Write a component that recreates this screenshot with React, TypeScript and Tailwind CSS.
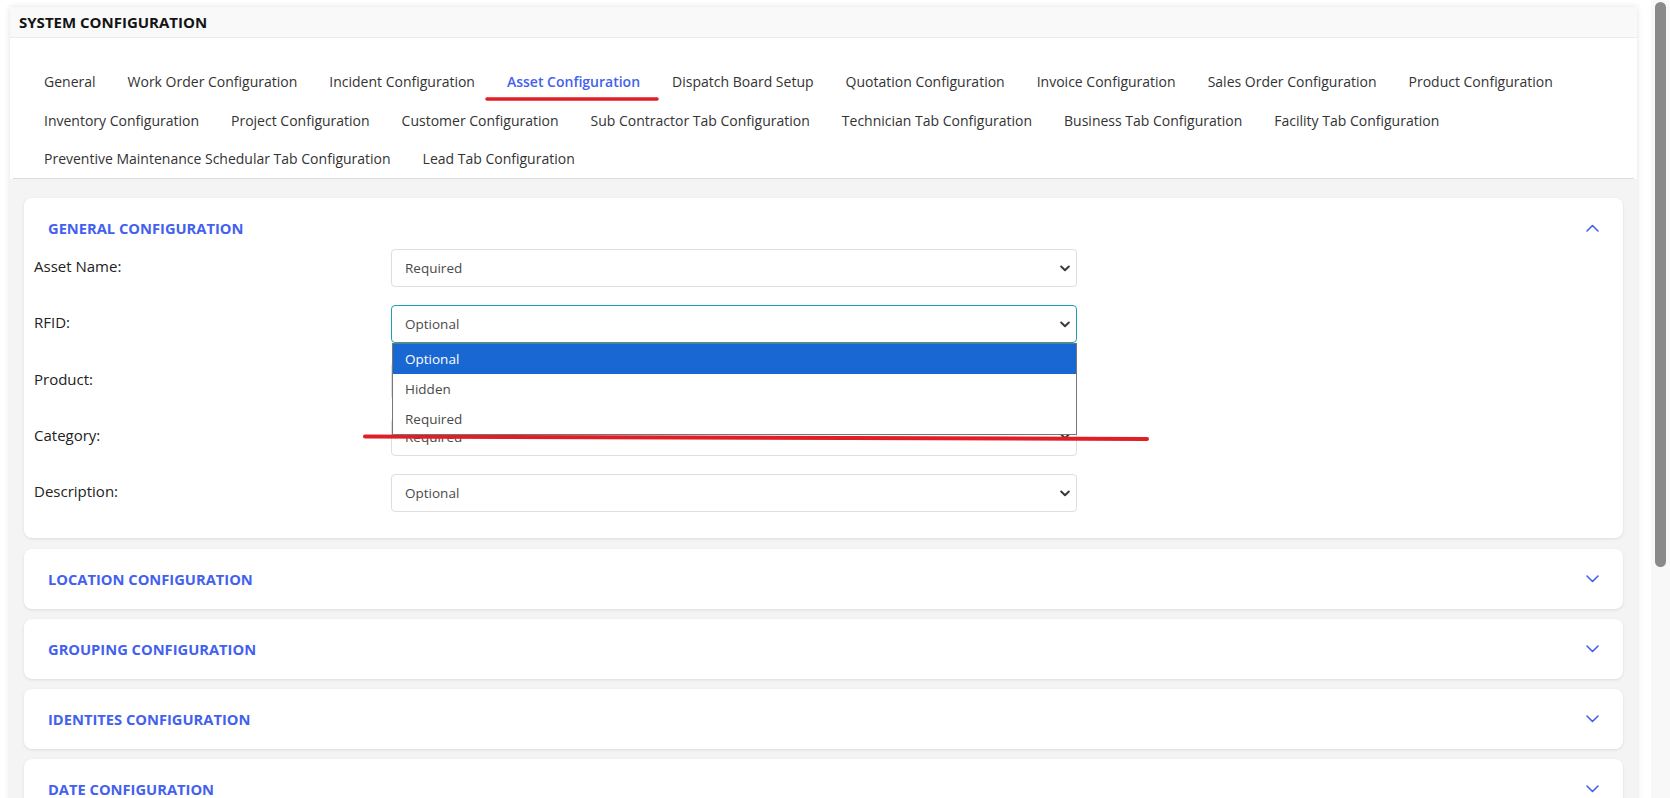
import { useState } from 'react'

const TAB_ROWS: string[][] = [
  [
    'General',
    'Work Order Configuration',
    'Incident Configuration',
    'Asset Configuration',
    'Dispatch Board Setup',
    'Quotation Configuration',
    'Invoice Configuration',
    'Sales Order Configuration',
    'Product Configuration',
  ],
  [
    'Inventory Configuration',
    'Project Configuration',
    'Customer Configuration',
    'Sub Contractor Tab Configuration',
    'Technician Tab Configuration',
    'Business Tab Configuration',
    'Facility Tab Configuration',
  ],
  ['Preventive Maintenance Schedular Tab Configuration', 'Lead Tab Configuration'],
]

const FIELDS = [
  { label: 'Asset Name:', value: 'Required' },
  { label: 'RFID:', value: 'Optional' },
  { label: 'Product:', value: 'Optional' },
  { label: 'Category:', value: 'Required' },
  { label: 'Description:', value: 'Optional' },
]

const SECTIONS = [
  'LOCATION CONFIGURATION',
  'GROUPING CONFIGURATION',
  'IDENTITES CONFIGURATION',
  'DATE CONFIGURATION',
]

const OPTIONS = ['Optional', 'Hidden', 'Required']

function Chevron({ up }: { up?: boolean }) {
  return (
    <svg width="13" height="8" viewBox="0 0 13 8" fill="none">
      <polyline
        points={up ? '1,7 6.5,1.5 12,7' : '1,1 6.5,6.5 12,1'}
        stroke="#4361ee"
        strokeWidth="1.6"
        strokeLinecap="round"
        strokeLinejoin="round"
      />
    </svg>
  )
}

function SelectBox({ value, focused, open }: { value: string; focused?: boolean; open?: boolean }) {
  return (
    <div className="relative w-[686px]">
      <div
        className={`flex h-[38px] items-center justify-between rounded-[4px] border bg-white pl-[13px] pr-[6px] text-[13.5px] text-[#4a4a4a] ${
          focused ? 'border-[#1fa0ae]' : 'border-[#dedede]'
        }`}
      >
        <span>{value}</span>
        <svg width="10" height="7" viewBox="0 0 10 7" fill="none">
          <polyline points="1.2,1.5 5,5.2 8.8,1.5" stroke="#3a3a3a" strokeWidth="2" strokeLinecap="round" strokeLinejoin="round" />
        </svg>
      </div>
      {open && (
        <div className="absolute left-[1px] right-0 top-full z-10 border border-[#767676] bg-white text-[13.5px] text-[#4a4a4a]">
          {OPTIONS.map((o, i) => (
            <div
              key={o}
              className={`flex h-[30px] items-center pl-[12px] ${i === 0 ? 'bg-[#1967d2] text-white' : ''}`}
            >
              {o}
            </div>
          ))}
        </div>
      )}
    </div>
  )
}

export default function App() {
  const [active] = useState('Asset Configuration')

  return (
    <div className="relative flex h-screen w-full overflow-hidden bg-white font-['Open_Sans',sans-serif]">
      <div className="min-w-0 flex-1 pl-[10px] pr-[14px] pt-[7px]">
        <div className="bg-white shadow-[0_0_6px_rgba(0,0,0,0.12)]">
          {/* Header */}
          <div className="flex h-[31px] items-center border-b border-[#ebebef] bg-[#f9f9fa] pl-[9px]">
            <h1 className="text-[15px] font-bold text-[#141414]">SYSTEM CONFIGURATION</h1>
          </div>

          {/* Tabs */}
          <div className="mx-[3px] border-b border-[#dcdcdc] pb-[1px] pl-[15px] pt-[24px]">
            {TAB_ROWS.map((row, r) => (
              <div key={r} className={`flex items-center ${r === 0 ? 'h-[39px]' : 'h-[38px]'}`}>
                {row.map((t) => (
                  <div
                    key={t}
                    className={`px-4 text-[14px] ${
                      t === active ? 'font-semibold text-[#4361ee]' : 'text-[#333333]'
                    }`}
                  >
                    {t}
                  </div>
                ))}
              </div>
            ))}
          </div>

          {/* Sections */}
          <div className="bg-[#f4f4f4] px-[14px] pb-[40px] pt-[19px]">
            <div className="mb-[11px] rounded-[8px] bg-white pb-[26px] shadow-[0_1px_3px_rgba(0,0,0,0.1)]">
              <div className="flex items-center justify-between pl-[24px] pr-[24px] pt-[19px] pb-[10px]">
                <h2 className="text-[14.7px] font-bold leading-[22px] text-[#4361ee]">GENERAL CONFIGURATION</h2>
                <Chevron up />
              </div>
              <div className="flex flex-col gap-[18.25px] pl-[10px]">
                {FIELDS.map((f, i) => (
                  <div key={f.label} className="flex items-start">
                    <label className="w-[357px] pt-[6px] text-[15px] font-medium text-[#222222]">{f.label}</label>
                    <SelectBox value={f.value} focused={i === 1} open={i === 1} />
                  </div>
                ))}
              </div>
            </div>

            {SECTIONS.map((s) => (
              <div
                key={s}
                className="mb-[10px] flex h-[60px] items-center justify-between rounded-[8px] bg-white pl-[24px] pr-[24px] shadow-[0_1px_3px_rgba(0,0,0,0.1)]"
              >
                <h2 className="text-[14.7px] font-bold text-[#4361ee]">{s}</h2>
                <Chevron />
              </div>
            ))}
          </div>
        </div>
      </div>

      {/* Scrollbar */}
      <div className="w-[19px] shrink-0 bg-[#f8f8f8] pl-[4px] pr-[4px] pt-[2px]">
        <div className="h-[565px] w-[11px] rounded-full bg-[#8a8a8a]" />
      </div>

      {/* Red annotation marks */}
      <svg className="pointer-events-none absolute inset-0 h-full w-full">
        <line x1="487" y1="99" x2="657" y2="99" stroke="#e11d25" strokeWidth="3.5" strokeLinecap="round" />
        <line x1="365" y1="436.5" x2="1147" y2="439" stroke="#e11d25" strokeWidth="4" strokeLinecap="round" />
      </svg>
    </div>
  )
}
